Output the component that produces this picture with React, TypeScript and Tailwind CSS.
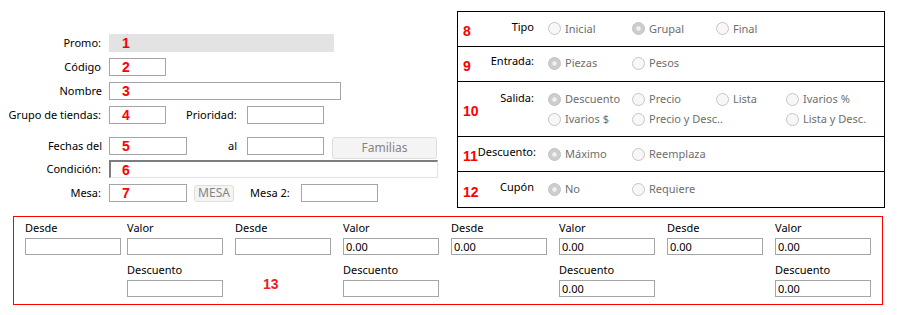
import React from 'react';

const RED = 'text-[#ff0000]';

function Num({ n, className = '' }: { n: string; className?: string }) {
  return (
    <span className={`font-['Liberation_Sans',Arial,sans-serif] text-[14px] font-bold leading-none ${RED} ${className}`}>{n}</span>
  );
}

function Box({ w, num, className = '' }: { w: string; num?: string; className?: string }) {
  return (
    <div className={`${w} h-[18px] border border-[#a5a5a5] bg-white flex items-center pl-[12px] ${className}`}>
      {num && <Num n={num} />}
    </div>
  );
}

function Radio({ label, checked = false }: { label: string; checked?: boolean }) {
  return (
    <div className="flex items-center gap-[4px] h-[16px]">
      <svg width="13" height="13" viewBox="0 0 13 13" className="shrink-0">
        {checked ? (
          <>
            <circle cx="6.5" cy="6.5" r="6" fill="#cdcdcd" stroke="#c2c2c2" />
            <circle cx="6.5" cy="6.5" r="2.2" fill="#f2f2f2" />
          </>
        ) : (
          <circle cx="6.5" cy="6.5" r="6" fill="#f7f7f7" stroke="#c4c4c4" />
        )}
      </svg>
      <span className="text-[#6e6e6e] whitespace-nowrap">{label}</span>
    </div>
  );
}

function OptRow({ num, label, children, tall = false }: { num: string; label: string; children: React.ReactNode; tall?: boolean }) {
  return (
    <div className={`flex items-center ${tall ? 'h-[56px]' : 'h-[35px]'} border-b border-black last:border-b-0`}>
      <div className="w-[90px] flex items-center pl-[5px] h-full">
        <Num n={num} className="mt-[4px]" />
        <div className={`flex-1 text-right pr-[14px] text-black whitespace-nowrap ${tall ? 'self-start mt-[8px]' : 'mb-[4px]'}`}>{label}</div>
      </div>
      {children}
    </div>
  );
}

function Field({ label, value, hidden = false, className = '' }: { label?: string; value?: string; hidden?: boolean; className?: string }) {
  if (hidden) return <div className={`w-[96px] ${className}`} />;
  return (
    <div className={`w-[96px] flex flex-col ${className}`}>
      <div className="h-[14px] leading-[14px] text-black mb-[3px]">{label}</div>
      <div className="h-[17px] border border-[#a5a5a5] bg-white flex items-center pl-[2px] text-black leading-none">{value}</div>
    </div>
  );
}

export default function App() {
  return (
    <div className="w-[897px] h-[315px] bg-white font-['Noto_Sans',sans-serif] text-[11px] text-black relative overflow-hidden">
      <div className="flex">
        {/* Left form */}
        <div className="w-[457px] pt-[34px] flex flex-col">
          <div className="flex items-center h-[18px]">
            <div className="w-[102px] text-right pr-[1px]">Promo:</div>
            <div className="ml-[7px] w-[225px] h-[18px] bg-[#e3e3e3] flex items-center pl-[13px]"><Num n="1" /></div>
          </div>
          <div className="flex items-center h-[18px] mt-[6px]">
            <div className="w-[102px] text-right pr-[1px]">Código</div>
            <Box w="w-[57px]" num="2" className="ml-[7px]" />
          </div>
          <div className="flex items-center h-[18px] mt-[6px]">
            <div className="w-[102px] text-right">Nombre</div>
            <Box w="w-[232px]" num="3" className="ml-[7px]" />
          </div>
          <div className="flex items-center h-[18px] mt-[6px]">
            <div className="w-[102px] text-right pr-[1px] whitespace-nowrap">Grupo de tiendas:</div>
            <Box w="w-[57px]" num="4" className="ml-[7px]" />
            <div className="ml-[20px] w-[61px] whitespace-nowrap">Prioridad:</div>
            <Box w="w-[77px]" />
          </div>
          <div className="flex items-start h-[22px] mt-[13px]">
            <div className="w-[102px] text-right h-[18px] leading-[18px]">Fechas del</div>
            <Box w="w-[78px]" num="5" className="ml-[7px]" />
            <div className="w-[50px] text-right h-[18px] leading-[18px]">al</div>
            <Box w="w-[77px]" className="ml-[10px]" />
            <div className="ml-[8px] w-[105px] h-[22px] rounded-[3px] border border-[#dedede] bg-[#f4f4f4] flex items-center justify-center text-[#858585] text-[12px]">Familias</div>
          </div>
          <div className="flex items-center h-[18px] mt-[1px]">
            <div className="w-[102px] text-right pr-[1px]">Condición:</div>
            <div className="ml-[7px] w-[329px] h-[18px] border-t-2 border-l-2 border-t-[#7d7d7d] border-l-[#7d7d7d] border-r border-b border-r-[#e2e2e2] border-b-[#e2e2e2] flex items-center pl-[11px]"><Num n="6" /></div>
          </div>
          <div className="flex items-center h-[18px] mt-[6px]">
            <div className="w-[102px] text-right pr-[1px]">Mesa:</div>
            <Box w="w-[78px]" num="7" className="ml-[7px]" />
            <div className="ml-[7px] w-[40px] h-[17px] rounded-[3px] border border-[#dedede] bg-[#f4f4f4] flex items-center justify-center text-[#858585] text-[12px]">MESA</div>
            <div className="ml-[16px] w-[51px] whitespace-nowrap">Mesa 2:</div>
            <Box w="w-[77px]" />
          </div>
        </div>

        {/* Right options panel */}
        <div className="mt-[11px] w-[428px] h-[197px] border border-black flex flex-col">
          <OptRow num="8" label="Tipo">
            <div className="grid grid-cols-[84px_84px_70px_auto]">
              <Radio label="Inicial" />
              <Radio label="Grupal" checked />
              <Radio label="Final" />
            </div>
          </OptRow>
          <OptRow num="9" label="Entrada:">
            <div className="grid grid-cols-[84px_84px_70px_auto]">
              <Radio label="Piezas" checked />
              <Radio label="Pesos" />
            </div>
          </OptRow>
          <OptRow num="10" label="Salida:" tall>
            <div className="grid grid-cols-[84px_84px_70px_auto] gap-y-[4px]">
              <Radio label="Descuento" checked />
              <Radio label="Precio" />
              <Radio label="Lista" />
              <Radio label="Ivarios %" />
              <Radio label="Ivarios $" />
              <Radio label="Precio y Desc.." />
              <div />
              <Radio label="Lista y Desc." />
            </div>
          </OptRow>
          <OptRow num="11" label="Descuento:">
            <div className="grid grid-cols-[84px_84px_70px_auto]">
              <Radio label="Máximo" checked />
              <Radio label="Reemplaza" />
            </div>
          </OptRow>
          <OptRow num="12" label="Cupón">
            <div className="grid grid-cols-[84px_84px_70px_auto]">
              <Radio label="No" checked />
              <Radio label="Requiere" />
            </div>
          </OptRow>
        </div>
      </div>

      {/* Ranges box */}
      <div className="ml-[13px] mt-[8px] w-[870px] h-[89px] border border-[#ff0000] pl-[11px] pt-[4px]">
        <div className="flex">
          <Field label="Desde" />
          <Field label="Valor" className="ml-[6px]" />
          <Field label="Desde" className="ml-[12px]" />
          <Field label="Valor" value="0.00" className="ml-[12px]" />
          <Field label="Desde" value="0.00" className="ml-[12px]" />
          <Field label="Valor" value="0.00" className="ml-[12px]" />
          <Field label="Desde" value="0.00" className="ml-[12px]" />
          <Field label="Valor" value="0.00" className="ml-[12px]" />
        </div>
        <div className="flex mt-[8px]">
          <Field hidden />
          <Field label="Descuento" className="ml-[6px]" />
          <div className="ml-[12px] w-[96px] flex items-end pb-[6px] pl-[28px]"><span className="font-['Liberation_Sans',Arial,sans-serif] text-[14px] font-bold leading-none text-[#f01c24]">13</span></div>
          <Field label="Descuento" className="ml-[12px]" />
          <Field hidden className="ml-[12px]" />
          <Field label="Descuento" value="0.00" className="ml-[12px]" />
          <Field hidden className="ml-[12px]" />
          <Field label="Descuento" value="0.00" className="ml-[12px]" />
        </div>
      </div>
    </div>
  );
}
